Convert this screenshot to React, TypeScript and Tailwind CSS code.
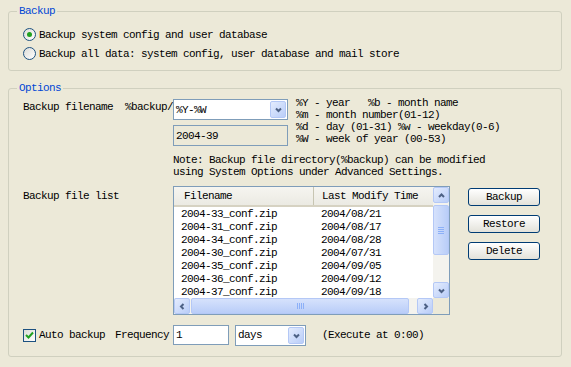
import React from 'react';

// XP style backup options panel
const font = "font-['Liberation_Mono',monospace] text-[11px] leading-[12px] tracking-[-0.6px] text-black";

const files = [
  ['2004-33_conf.zip', '2004/08/21'],
  ['2004-31_conf.zip', '2004/08/17'],
  ['2004-34_conf.zip', '2004/08/28'],
  ['2004-30_conf.zip', '2004/07/31'],
  ['2004-35_conf.zip', '2004/09/05'],
  ['2004-36_conf.zip', '2004/09/12'],
  ['2004-37_conf.zip', '2004/09/18'],
];

function Chevron({ dir }: { dir: 'up' | 'down' | 'left' | 'right' }) {
  const d = {
    up: 'M2 6 L4.5 3.5 L7 6',
    down: 'M2 3.5 L4.5 6 L7 3.5',
    left: 'M5.5 2 L3 4.5 L5.5 7',
    right: 'M3.5 2 L6 4.5 L3.5 7',
  }[dir];
  return (
    <svg width="9" height="9" viewBox="0 0 9 9">
      <path d={d} fill="none" stroke="#4D6185" strokeWidth="2" />
    </svg>
  );
}

function ScrollBtn({ dir }: { dir: 'up' | 'down' | 'left' | 'right' }) {
  return (
    <div className="w-[16px] h-[16px] flex items-center justify-center rounded-[2px] border border-[#B4C8F6] bg-gradient-to-br from-[#E4ECFD] to-[#B9CDF8]">
      <Chevron dir={dir} />
    </div>
  );
}

function Radio({ checked }: { checked?: boolean }) {
  return (
    <div className="w-[13px] h-[13px] rounded-full border border-[#1C5180] bg-gradient-to-br from-[#DCDCD7] to-white flex items-center justify-center">
      {checked && <div className="w-[5px] h-[5px] rounded-full bg-[#21A121]" />}
    </div>
  );
}

function Combo({ value, w }: { value: string; w: string }) {
  return (
    <div className={`${w} h-[21px] border border-[#7F9DB9] bg-white flex items-center pl-[2px] pr-[1px]`}>
      <span className="flex-1">{value}</span>
      <div className="w-[16px] h-[17px] flex items-center justify-center rounded-[2px] border border-[#B4C8F6] bg-gradient-to-br from-[#E4ECFD] to-[#B9CDF8]">
        <Chevron dir="down" />
      </div>
    </div>
  );
}

function XpButton({ label }: { label: string }) {
  return (
    <div className="w-[72px] h-[18px] rounded-[3px] border border-[#003C74] bg-gradient-to-b from-white to-[#E3E2DA] flex items-center justify-center">
      {label}
    </div>
  );
}

export default function App() {
  return (
    <div className={`w-[571px] h-[367px] bg-[#ECE9D8] pl-[8px] pt-[5px] ${font}`}>
      <fieldset className="w-[554px] border border-[#D0D0BF] rounded-[3px] pl-[14px] pb-[7px]">
        <legend className="ml-[-6px] px-[2px] text-[#0046D5]">Backup</legend>
        <div className="pt-[8px]">
          <label className="h-[19px] flex items-center gap-[3px]">
            <Radio checked />
            <span>Backup system config and user database</span>
          </label>
          <label className="h-[19px] flex items-center gap-[3px]">
            <Radio />
            <span>Backup all data: system config, user database and mail store</span>
          </label>
        </div>
      </fieldset>

      <fieldset className="mt-[11px] w-[554px] border border-[#D0D0BF] rounded-[3px] pl-[14px] pb-[11px]">
        <legend className="ml-[-6px] px-[2px] text-[#0046D5]">Options</legend>

        <div className="pt-[3px] flex items-start">
          <div className="w-[150px] pt-[4px] whitespace-pre">Backup filename  %backup/</div>
          <div className="flex flex-col gap-[5px] pt-[2px]">
            <Combo value="%Y-%W" w="w-[115px]" />
            <div className="w-[115px] h-[21px] border border-[#7F9DB9] bg-[#ECE9D8] flex items-center pl-[2px]">2004-39</div>
          </div>
          <div className="ml-[8px] whitespace-pre">
            <div>%Y - year   %b - month name</div>
            <div>%m - month number(01-12)</div>
            <div>%d - day (01-31) %w - weekday(0-6)</div>
            <div>%W - week of year (00-53)</div>
          </div>
        </div>

        <div className="ml-[150px] mt-[8px]">
          <div>Note: Backup file directory(%backup) can be modified</div>
          <div>using System Options under Advanced Settings.</div>
        </div>

        <div className="mt-[8px] flex items-start">
          <div className="w-[150px] pt-[4px]">Backup file list</div>
          <div className="w-[277px] h-[129px] border border-[#7F9DB9] bg-white flex flex-col">
            <div className="flex h-[111px]">
              <div className="flex-1 overflow-hidden">
                <div className="h-[20px] flex items-center bg-gradient-to-b from-[#F6F5F0] to-[#EBEAE3] border-b-2 border-[#D6D2C2]">
                  <div className="w-[140px] pl-[10px] h-full flex items-center border-r border-[#C7C5B2]">Filename</div>
                  <div className="pl-[8px] whitespace-nowrap">Last Modify Time</div>
                </div>
                {files.map(([n, t]) => (
                  <div key={n} className="h-[13px] flex items-center">
                    <div className="w-[140px] pl-[7px]">{n}</div>
                    <div className="pl-[7px]">{t}</div>
                  </div>
                ))}
              </div>
              <div className="w-[16px] flex flex-col bg-[#F4F3EE]">
                <ScrollBtn dir="up" />
                <div className="mt-[2px] h-[50px] rounded-[2px] border border-[#B4C8F6] bg-gradient-to-r from-[#D6E2FC] to-[#B9CDF8] flex flex-col items-center justify-center gap-[1px]">
                  {[0, 1, 2, 3].map(i => <div key={i} className="w-[6px] h-[1px] bg-[#8CB0F8]" />)}
                </div>
                <div className="flex-1" />
                <ScrollBtn dir="down" />
              </div>
            </div>
            <div className="flex h-[16px] bg-[#F4F3EE]">
              <ScrollBtn dir="left" />
              <div className="ml-[1px] w-[218px] rounded-[2px] border border-[#B4C8F6] bg-gradient-to-b from-[#D6E2FC] to-[#B9CDF8] flex items-center justify-center gap-[1px]">
                {[0, 1, 2, 3].map(i => <div key={i} className="w-[1px] h-[6px] bg-[#8CB0F8]" />)}
              </div>
              <div className="flex-1" />
              <ScrollBtn dir="right" />
              <div className="w-[16px] bg-[#ECE9D8]" />
            </div>
          </div>
          <div className="ml-[18px] pt-[2px] flex flex-col gap-[9px]">
            <XpButton label="Backup" />
            <XpButton label="Restore" />
            <XpButton label="Delete" />
          </div>
        </div>

        <div className="mt-[10px] h-[20px] flex items-center">
          <div className="w-[13px] h-[13px] border border-[#1C5180] bg-gradient-to-br from-[#DCDCD7] to-white flex items-center justify-center">
            <svg width="9" height="9" viewBox="0 0 9 9">
              <path d="M1 4 L3.5 6.5 L8 1.5" fill="none" stroke="#21A121" strokeWidth="2" />
            </svg>
          </div>
          <span className="ml-[3px]">Auto backup</span>
          <span className="ml-[10px]">Frequency</span>
          <div className="ml-[4px] w-[56px] h-[20px] border border-[#7F9DB9] bg-white pl-[2px] flex items-center">1</div>
          <div className="ml-[6px]">
            <Combo value="days" w="w-[71px]" />
          </div>
          <span className="ml-[16px]">(Execute at 0:00)</span>
        </div>
      </fieldset>
    </div>
  );
}
